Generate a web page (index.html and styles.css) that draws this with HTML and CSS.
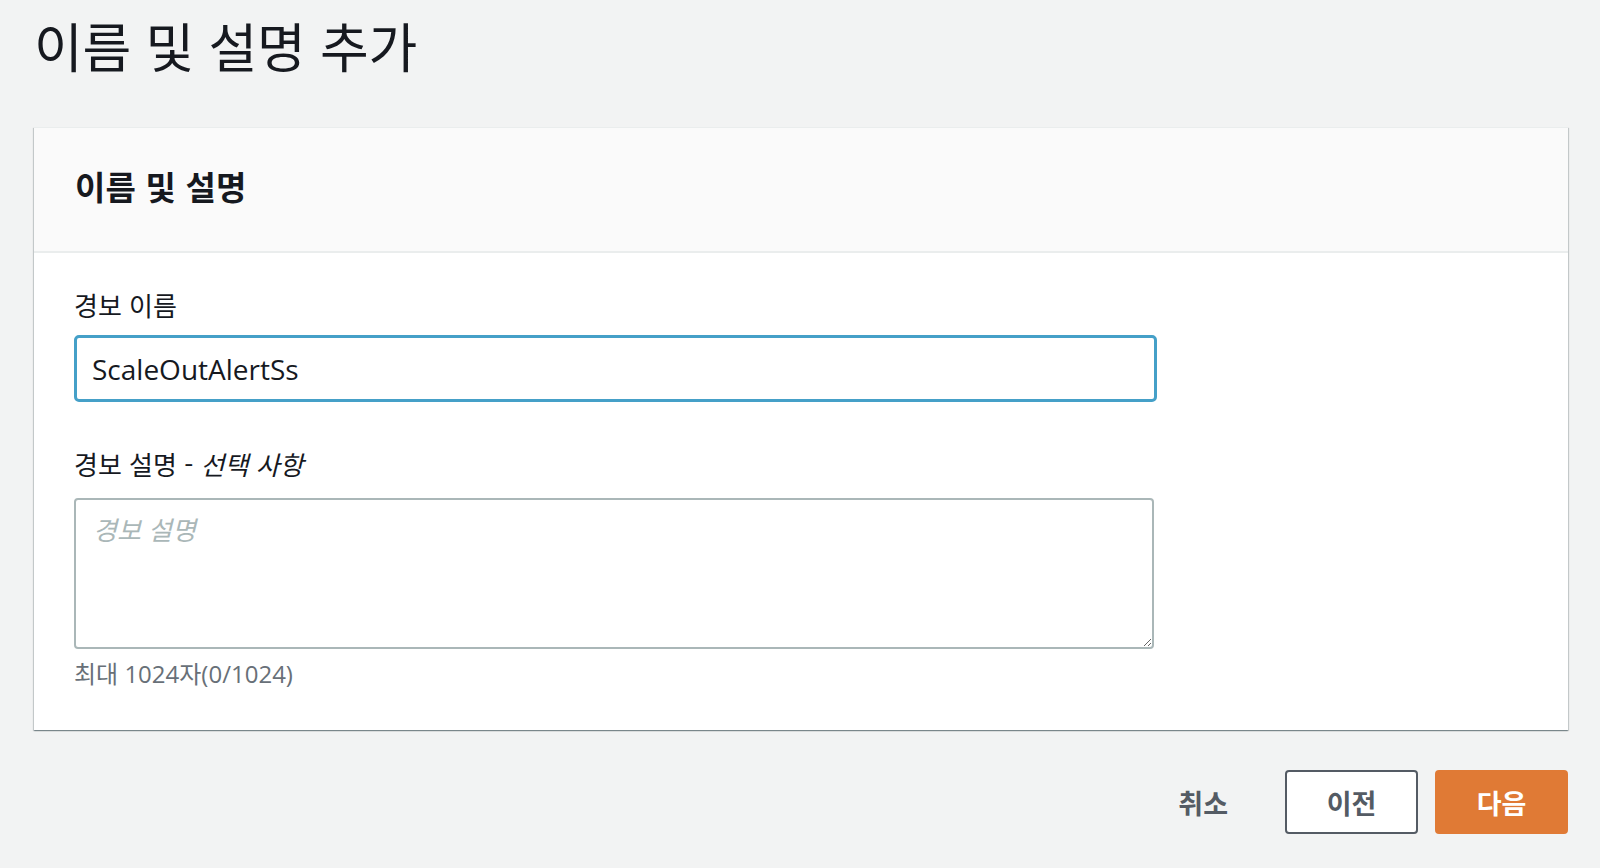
FILE: index.html
```html
<!DOCTYPE html>
<html lang="ko">
<head>
<meta charset="utf-8">
<title>이름 및 설명 추가</title>
<link rel="stylesheet" href="styles.css">
</head>
<body>
<div class="page">
  <h1 class="title">이름 및 설명 추가</h1>
  <section class="card">
    <div class="card-header">
      <h2 class="card-title">이름 및 설명</h2>
    </div>
    <div class="card-body">
      <div class="field">
        <label class="label" for="alarm-name">경보 이름</label>
        <input id="alarm-name" class="input" type="text" value="ScaleOutAlertSs">
      </div>
      <div class="field field-desc">
        <label class="label" for="alarm-desc">경보 설명 - <i class="optional">선택 사항</i></label>
        <textarea id="alarm-desc" class="textarea" placeholder="경보 설명"></textarea>
        <div class="hint">최대 1024자(0/1024)</div>
      </div>
    </div>
  </section>
  <div class="actions">
    <button class="btn btn-link" type="button">취소</button>
    <button class="btn btn-normal" type="button">이전</button>
    <button class="btn btn-primary" type="button">다음</button>
  </div>
</div>
</body>
</html>
```
FILE: styles.css
```css
html, body {
  margin: 0;
  padding: 0;
  background: #f2f3f3;
}
body {
  font-family: "Open Sans", "Noto Sans CJK KR", sans-serif;
  color: #16191f;
}
.page {
  padding: 0 32px 0 34px;
}
.title {
  margin: 0;
  padding-top: 8px;
  font-family: "Noto Sans CJK KR", sans-serif;
  font-weight: 400;
  font-size: 53px;
  line-height: 74px;
  letter-spacing: -0.3px;
  color: #16191f;
}
.card {
  margin-top: 45px;
  background: #fff;
  box-shadow: 0 1px 1px 0 rgba(0, 28, 36, 0.3), 1px 1px 1px 0 rgba(0, 28, 36, 0.15), -1px 1px 1px 0 rgba(0, 28, 36, 0.15);
}
.card-header {
  box-sizing: border-box;
  height: 126px;
  background: #fafafa;
  border-top: 1px solid #eaeded;
  border-bottom: 2px solid #eaeded;
  padding: 0 41px 7px;
  display: flex;
  align-items: center;
}
.card-title {
  margin: 0;
  font-family: "Noto Sans CJK KR", sans-serif;
  font-weight: 700;
  font-size: 33px;
  line-height: 44px;
  letter-spacing: 0.2px;
  color: #16191f;
}
.card-body {
  padding: 34px 40px 39px;
}
.field {
  display: flex;
  flex-direction: column;
}
.field-desc {
  margin-top: 44px;
}
.label {
  font-family: "Noto Sans CJK KR", sans-serif;
  font-size: 26px;
  line-height: 36px;
  color: #16191f;
  margin-bottom: 12px;
}
.optional {
  font-style: italic;
}
.input {
  box-sizing: border-box;
  width: 1083px;
  height: 67px;
  margin: 0;
  padding: 0 15px;
  border: 3.5px solid #45a0c8;
  border-radius: 5px;
  outline: none;
  font-family: "Open Sans", "Noto Sans CJK KR", sans-serif;
  font-size: 28px;
  color: #16191f;
  background: #fff;
}
.textarea {
  box-sizing: border-box;
  width: 1080px;
  height: 151px;
  margin: 4px 0 0;
  padding: 11px 17px;
  border: 2px solid #aab7b8;
  border-radius: 4px;
  outline: none;
  font-family: "Noto Sans CJK KR", sans-serif;
  font-size: 26px;
  line-height: 36px;
  color: #16191f;
  background: #fff;
  resize: vertical;
}
.textarea::placeholder {
  color: #aab7b8;
  font-style: italic;
}
.hint {
  margin-top: 8px;
  font-family: "Open Sans", "Noto Sans CJK KR", sans-serif;
  font-size: 24px;
  line-height: 34px;
  color: #687078;
}
.actions {
  display: flex;
  justify-content: flex-end;
  align-items: center;
  gap: 17px;
  margin-top: 40px;
}
.btn {
  box-sizing: border-box;
  height: 64px;
  margin: 0;
  font-family: "Noto Sans CJK KR", sans-serif;
  font-weight: 700;
  font-size: 27px;
  border-radius: 4px;
  cursor: pointer;
}
.btn-link {
  background: transparent;
  border: none;
  color: #545b64;
  padding: 0 16px;
  margin-right: 24px;
}
.btn-normal {
  width: 133px;
  background: #fff;
  border: 2.5px solid #545b64;
  color: #545b64;
}
.btn-primary {
  width: 133px;
  background: #e07a35;
  border: 2.5px solid #e07a35;
  color: #fff;
}
```
